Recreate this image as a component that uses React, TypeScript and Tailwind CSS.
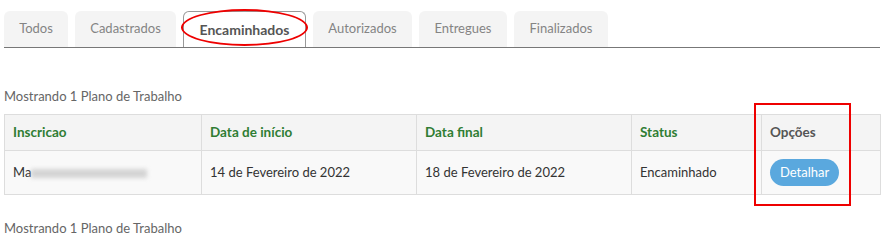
import * as React from 'react';

const tabs = [
    {label: 'Todos', w: 'w-[64px]'},
    {label: 'Cadastrados', w: 'w-[101px]'},
    {label: 'Encaminhados', w: 'w-[123px]'},
    {label: 'Autorizados', w: 'w-[99px]'},
    {label: 'Entregues', w: 'w-[88px]'},
    {label: 'Finalizados', w: 'w-[94px]'},
];
const active = 'Encaminhados';

const cols = [
    {label: 'Inscricao', w: 'w-[197px]', green: true},
    {label: 'Data de início', w: 'w-[215px]', green: true},
    {label: 'Data final', w: 'w-[215px]', green: true},
    {label: 'Status', w: 'w-[130px]', green: true},
    {label: 'Opções', w: 'w-[119px]', green: false},
];

function Tabs() {
    return (
        <div className="relative">
            <ul className="flex gap-[7px] border-b border-[#777] pt-[11px]">
                {tabs.map(tab => (
                    <li
                        key={tab.label}
                        className={
                            tab.label === active
                                ? `${tab.w} h-[36px] flex items-center justify-center rounded-t-[6px] border border-b-0 border-[#999] bg-white text-[14px] font-bold text-[#555]`
                                : `${tab.w} h-[36px] flex items-center justify-center rounded-t-[6px] bg-[#f4f4f4] text-[13px] text-[#848484]`
                        }
                    >
                        {tab.label}
                    </li>
                ))}
            </ul>
            <div className="absolute left-[177px] top-[9px] w-[127px] h-[37px] rounded-[50%] border-[2.5px] border-[#e00] pointer-events-none" />
        </div>
    );
}

function Counter() {
    return <p className="text-[13px] text-[#666] leading-[16px]">Mostrando 1 Plano de Trabalho</p>;
}

export default function App() {
    return (
        <div className="bg-white w-[896px] h-[241px] pl-[4px] font-['Lato',sans-serif]">
            <div className="w-[876px]">
                <Tabs />
                <div className="mt-[40px]">
                    <Counter />
                </div>
                <div className="relative mt-[10px]">
                    <table className="w-full border-collapse table-fixed">
                        <thead>
                            <tr className="bg-[#f4f4f4] h-[36px]">
                                {cols.map(c => (
                                    <th
                                        key={c.label}
                                        className={`${c.w} border border-[#ddd] text-left px-[8px] text-[13.5px] font-bold ${c.green ? 'text-[#2f7d33]' : 'text-[#555]'}`}
                                    >
                                        {c.label}
                                    </th>
                                ))}
                            </tr>
                        </thead>
                        <tbody>
                            <tr className="bg-[#f9f9f9] h-[44px] text-[13px] text-[#333]">
                                <td className="border border-[#ddd] px-[8px]">
                                    <span>Ma</span>
                                    <span className="inline-block align-middle w-[116px] h-[9px] bg-[#bbb] blur-[2px] opacity-60" />
                                </td>
                                <td className="border border-[#ddd] px-[8px]">14 de Fevereiro de 2022</td>
                                <td className="border border-[#ddd] px-[8px]">18 de Fevereiro de 2022</td>
                                <td className="border border-[#ddd] px-[8px]">Encaminhado</td>
                                <td className="border border-[#ddd] px-[8px]">
                                    <button type="button" className="h-[27px] px-[10px] rounded-full bg-[#5aa8de] text-white text-[13px]">
                                        Detalhar
                                    </button>
                                </td>
                            </tr>
                        </tbody>
                    </table>
                    <div className="absolute left-[750px] top-[-11px] w-[97px] h-[103px] border-2 border-[#e00] pointer-events-none" />
                </div>
                <div className="mt-[25px]">
                    <Counter />
                </div>
            </div>
        </div>
    );
}
